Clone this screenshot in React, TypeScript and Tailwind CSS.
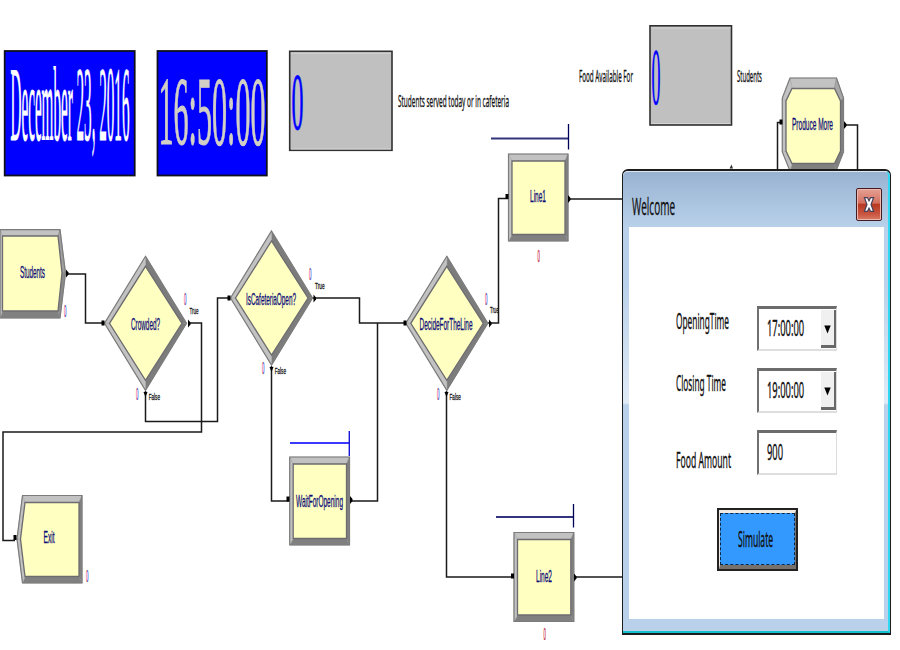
import { useLayoutEffect, useRef, useState } from "react";
import type { ReactNode } from "react";

type Pt = [number, number];

const SERIF = '"Liberation Serif", serif';
const SANS = '"Liberation Sans", sans-serif';
const UI = '"Noto Sans", "Open Sans", sans-serif';

const LIGHT = "#c2c2c2";
const DARK = "#808080";

/** Canvas label squeezed to a fixed width. */
function Label({
  x,
  y,
  w,
  size,
  fill = "#0c0c78",
  font = SANS,
  stroke = 0,
  children,
}: {
  x: number;
  y: number;
  w: number;
  size: number;
  fill?: string;
  font?: string;
  stroke?: number;
  children: string;
}) {
  return (
    <text
      x={x}
      y={y}
      fontSize={size}
      fontFamily={font}
      fill={fill}
      stroke={stroke ? fill : "none"}
      strokeWidth={stroke}
      textLength={w}
      lengthAdjust="spacingAndGlyphs"
    >
      {children}
    </text>
  );
}

/** Bevelled module shape: one shaded face per side around a yellow centre. */
function Bevel({ outer, inner, shades }: { outer: Pt[]; inner: Pt[]; shades: string[] }) {
  return (
    <g strokeLinejoin="miter">
      {outer.map((p, i) => {
        const j = (i + 1) % outer.length;
        return (
          <polygon
            key={i}
            points={[p, outer[j], inner[j], inner[i]].join(" ")}
            fill={shades[i]}
            stroke={shades[i] === LIGHT ? "#a8a8a8" : "#8c8c8c"}
            strokeWidth="0.6"
          />
        );
      })}
      <polygon points={inner.join(" ")} fill="#ffffc2" stroke="#6c6c70" strokeWidth="1.3" />
      <polygon points={outer.join(" ")} fill="none" stroke="#7c7c7c" strokeWidth="1.2" />
    </g>
  );
}

function Box({ x1, y1, x2, y2 }: { x1: number; y1: number; x2: number; y2: number }) {
  return (
    <Bevel
      outer={[[x1, y1], [x2, y1], [x2, y2], [x1, y2]]}
      inner={[[x1 + 3.5, y1 + 7], [x2 - 3, y1 + 7], [x2 - 3, y2 - 6.5], [x1 + 3.5, y2 - 6.5]]}
      shades={[LIGHT, DARK, DARK, LIGHT]}
    />
  );
}

function Diamond({ cx, cy }: { cx: number; cy: number }) {
  return (
    <Bevel
      outer={[[cx, cy - 67], [cx + 41, cy], [cx, cy + 67], [cx - 41, cy]]}
      inner={[[cx, cy - 57], [cx + 36.5, cy], [cx, cy + 57], [cx - 36, cy]]}
      shades={["#7c7c7c", "#7c7c7c", LIGHT, LIGHT]}
    />
  );
}

function Wire({ d }: { d: string }) {
  return <path d={d} fill="none" stroke="#1a1a1a" strokeWidth="1.5" />;
}

const inPorts: Pt[] = [[103, 323], [229, 298], [405, 323], [288, 499], [507, 196.5], [512.5, 576], [15, 537.5], [781, 122]];
const outPorts: Pt[] = [[66, 273.5], [188, 323.5], [313.5, 298.5], [489, 323.5], [568, 199], [574, 577.5], [350, 500], [844, 125]];
const downPorts: Pt[] = [[145.5, 392], [271.5, 367], [446.5, 392]];
const zeros: [number, number, boolean][] = [
  [64, 316.5, false], [184, 304.5, false], [136, 399.5, false], [309, 279.5, false], [262, 374, false],
  [485, 304.5, false], [437, 399.5, false], [537.5, 261.5, true], [543.5, 640, true], [86, 581.5, false],
];

function Model() {
  return (
    <svg className="absolute inset-0" width="900" height="650" viewBox="0 0 900 650">
      <defs>
        <linearGradient id="fringe">
          <stop offset="0.2" stopColor="#f04068" />
          <stop offset="0.8" stopColor="#2038e8" />
        </linearGradient>
      </defs>

      <rect x="4.7" y="51" width="130" height="124.5" fill="#0000ff" stroke="#10101c" strokeWidth="1.8" />
      <Label x={10.5} y={139.5} w={119} size={105} fill="#fff" font={SERIF} stroke={0.9}>December 23, 2016</Label>
      <rect x="157.5" y="51" width="109.3" height="124.5" fill="#0000ff" stroke="#10101c" strokeWidth="1.8" />
      <Label x={158.5} y={144} w={107} size={98} fill="#d2cfc6" font={SERIF} stroke={1.1}>16:50:00</Label>

      <rect x="289.7" y="51.3" width="102.3" height="99" fill="#c0c0c0" stroke="#303030" strokeWidth="1.6" />
      <path d="M291 53.2H391M391 149H291" stroke="#d4d4d4" />
      <Label x={291.5} y={129} w={12} size={80} fill="#0000ff" font={SERIF} stroke={0.8}>0</Label>
      <Label x={398} y={107.3} w={111} size={16.5} fill="#111" font={UI} stroke={0.3}>Students served today or in cafeteria</Label>

      <Label x={579} y={81.5} w={54} size={16} fill="#111" font={UI} stroke={0.3}>Food Available For</Label>
      <rect x="650" y="25.8" width="81.5" height="99.2" fill="#c0c0c0" stroke="#303030" strokeWidth="1.6" />
      <path d="M651 28H730.5M730.5 123.5H651" stroke="#d4d4d4" />
      <Label x={651.5} y={104.3} w={9} size={80} fill="#0000ff" font={SERIF} stroke={0.6}>0</Label>
      <Label x={737} y={81.5} w={25} size={16} fill="#111" font={UI} stroke={0.3}>Students</Label>

      <Wire d="M66 274H85.5V323H104" />
      <Wire d="M188 323H201.5V432H3V540.5H15" />
      <Wire d="M145.5 391V421.5H217.5V298H230" />
      <Wire d="M313 298H359.5V323H406" />
      <Wire d="M271.5 366V501H289" />
      <Wire d="M350 501H377.5V323" />
      <Wire d="M488 323H498.5V198.5H508" />
      <Wire d="M446.5 391V577H513" />
      <Wire d="M569 199H622" />
      <Wire d="M574 577H622" />
      <Wire d="M782 122.5H777.5V170" />
      <Wire d="M844 125H857.5V170" />
      <path d="M729.5 168.5L731.5 164.5L733 168.5Z" fill="#333" />

      <path d="M290 443H349" stroke="#3a3aff" strokeWidth="2" />
      <path d="M349.3 431V456" stroke="#1616d8" strokeWidth="1.4" />
      <path d="M491 138.5H568" stroke="#34347c" strokeWidth="2" />
      <path d="M568.5 124V149.5" stroke="#000058" strokeWidth="1.3" />
      <path d="M496 517H573" stroke="#34347c" strokeWidth="2" />
      <path d="M573.5 504V527.5" stroke="#000058" strokeWidth="1.3" />

      <Bevel
        outer={[[0, 229.7], [60, 229.7], [65.5, 273], [60, 318], [0, 318]]}
        inner={[[2.5, 236], [58, 236], [62, 273], [58, 311], [2.5, 311]]}
        shades={[LIGHT, "#a0a0a0", "#8c8c8c", DARK, LIGHT]}
      />
      <Bevel
        outer={[[22.5, 495.5], [82, 495.5], [82, 583], [22.5, 583], [17, 539]]}
        inner={[[25, 502.5], [79, 502.5], [79, 576.5], [25, 576.5], [20.5, 539]]}
        shades={[LIGHT, DARK, DARK, LIGHT, LIGHT]}
      />
      <Bevel
        outer={[[790, 78], [836.5, 78], [843.5, 98], [843.5, 152], [836, 171], [790, 171], [782.3, 152], [782.3, 98]]}
        inner={[[792, 88.5], [834.5, 88.5], [840.5, 101], [840.5, 151], [834.5, 163.5], [792, 163.5], [786, 151], [786, 101]]}
        shades={[LIGHT, "#a8a8a8", DARK, DARK, DARK, LIGHT, LIGHT, LIGHT]}
      />
      <Box x1={508.5} y1={154} x2={568} y2={241} />
      <Box x1={514} y1={532.5} x2={573.8} y2={621.5} />
      <Box x1={289.7} y1={457} x2={349.5} y2={545} />
      <Diamond cx={145.5} cy={323.3} />
      <Diamond cx={271.5} cy={298} />
      <Diamond cx={446.8} cy={323.3} />

      {inPorts.map(([x, y]) => <rect key={`${x}-${y}`} x={x - 1.5} y={y - 2.5} width="3" height="5" fill="#000" />)}
      {outPorts.map(([x, y]) => <path key={`${x}-${y}`} d={`M${x} ${y - 4}l2.5 3v2l-2.5 3z`} fill="#000" />)}
      {downPorts.map(([x, y]) => <path key={`${x}-${y}`} d={`M${x - 2} ${y}h4l-2 5z`} fill="#000" />)}

      <Label x={20} y={277.5} w={25} size={16} stroke={0.3}>Students</Label>
      <Label x={131} y={330} w={29} size={16} stroke={0.3}>Crowded?</Label>
      <Label x={246} y={305} w={50} size={16} stroke={0.3}>IsCafeteriaOpen?</Label>
      <Label x={419.5} y={330} w={53} size={16} stroke={0.3}>DecideForTheLine</Label>
      <Label x={296} y={507} w={47} size={16} stroke={0.3}>WaitForOpening</Label>
      <Label x={530} y={202} w={16} size={16} stroke={0.3}>Line1</Label>
      <Label x={536} y={582} w={16} size={16} stroke={0.3}>Line2</Label>
      <Label x={43.5} y={543.3} w={11} size={16} stroke={0.3}>Exit</Label>
      <Label x={792} y={130} w={41} size={16} stroke={0.3}>Produce More</Label>

      <Label x={189.5} y={314.3} w={9} size={9.5} fill="#111" stroke={0.3}>True</Label>
      <Label x={315} y={288.8} w={9.5} size={9.5} fill="#111" stroke={0.3}>True</Label>
      <Label x={490} y={313.3} w={8.5} size={9.5} fill="#111" stroke={0.3}>True</Label>
      <Label x={148.7} y={399.5} w={11.3} size={9.5} fill="#111" stroke={0.3}>False</Label>
      <Label x={274.7} y={374.3} w={11.3} size={9.5} fill="#111" stroke={0.3}>False</Label>
      <Label x={449.5} y={399.5} w={11.3} size={9.5} fill="#111" stroke={0.3}>False</Label>

      {zeros.map(([x, y, red]) => (
        <Label key={`${x}-${y}`} x={x} y={y} w={2.4} size={16} fill={red ? "#c01830" : "url(#fringe)"} stroke={0.3}>0</Label>
      ))}
    </svg>
  );
}

/** Dialog text compressed horizontally to the given width. */
function Fit({ w, className, children }: { w: number; className: string; children: ReactNode }) {
  const ref = useRef<HTMLSpanElement>(null);
  const [k, setK] = useState(1);
  useLayoutEffect(() => {
    if (ref.current) setK(w / ref.current.offsetWidth);
  }, [w]);
  return (
    <span className="block shrink-0" style={{ width: w }}>
      <span
        ref={ref}
        className={`inline-block origin-left whitespace-nowrap align-top ${className}`}
        style={{ transform: `scaleX(${k})` }}
      >
        {children}
      </span>
    </span>
  );
}

const uiText = "font-['Noto_Sans','Open_Sans',sans-serif] text-[21px] leading-6 text-[#111] [-webkit-text-stroke:0.35px_#111]";
const field = "flex h-[45px] w-[80px] shrink-0 border-t-[3px] border-r border-b-2 border-l-2 border-t-[#6c6c6c] border-r-[#dcdcdc] border-b-[#dedede] border-l-[#707070] bg-white";

function TimeField({ value }: { value: string }) {
  return (
    <div className={field}>
      <div className="flex-1 pt-[7px] pl-[8px]">
        <Fit w={37} className={uiText}>{value}</Fit>
      </div>
      <div className="mt-px flex h-[38px] w-[14.5px] items-center justify-center border-r-2 border-b-[3px] border-[#686868] bg-[#f0f0f0] pt-[4px]">
        <svg width="7" height="9" viewBox="0 0 7 9"><path d="M0.3 0.5H6.7L3.5 8.5Z" fill="#000" /></svg>
      </div>
    </div>
  );
}

function Row({ label, w, top, children }: { label: string; w: number; top: string; children: ReactNode }) {
  return (
    <div className="flex">
      <div className={`w-[81px] ${top}`}>
        <Fit w={w} className={uiText}>{label}</Fit>
      </div>
      {children}
    </div>
  );
}

function WelcomeDialog() {
  return (
    <div className="absolute top-[169px] left-[622px] flex h-[465.5px] w-[269px] flex-col rounded-t-[6px] border-[1.5px] border-t-2 border-b-2 border-[#1c1c1c] bg-[#b9d1ea]">
      <div className="flex flex-1 flex-col rounded-t-[5px] border-t border-r-2 border-b-2 border-t-[#dce6f0] border-r-[#30d8f0] border-b-[#10c0cc] bg-[linear-gradient(#98b3d2_0px,#b9d1ea_56px,#b9d1ea_110px,#dfeaf6_228px,#dfeaf6_231px,#b9d1ea_233px)]">
        <div className="flex h-[55px] items-start justify-between pl-[9px]">
          <div className="pt-[20px]">
            <Fit w={43} className="font-['Open_Sans',sans-serif] text-[23px] leading-7 text-[#111] [-webkit-text-stroke:0.35px_#111]">Welcome</Fit>
          </div>
          <div className="mt-[16px] mr-[6px] flex h-[33px] w-[26px] items-center justify-center rounded-[2px] border-[1.5px] border-[#431c22] bg-[linear-gradient(#e5a094,#d4705f_45%,#b83a22_50%,#c9543f_80%,#d87d68)] shadow-[inset_0_0_0_1px_#eeb8ae]">
            <svg width="12" height="19" viewBox="0 0 13 20">
              <path d="M1.5 2.5H4.8L6.5 6L8.2 2.5H11.5L8.7 10L11.5 17.5H8.2L6.5 14L4.8 17.5H1.5L4.3 10Z" fill="#fff" stroke="#4a4058" strokeWidth="1.3" />
            </svg>
          </div>
        </div>
        <div className="mr-[4.5px] mb-[12px] ml-[5.5px] flex flex-1 flex-col bg-white pt-[79px] pl-[47px]">
          <div className="flex flex-col gap-[17px]">
            <Row label="OpeningTime" w={53} top="pt-[3px]"><TimeField value="17:00:00" /></Row>
            <Row label="Closing Time" w={50} top="pt-[3px]"><TimeField value="19:00:00" /></Row>
            <Row label="Food Amount" w={55} top="pt-[18px]">
              <div className={field}>
                <div className="pt-[7px] pl-[8px]"><Fit w={16} className={uiText}>900</Fit></div>
              </div>
            </Row>
          </div>
          <button className="mt-[33px] ml-[41px] flex h-[62.5px] w-[81px] border-2 border-[#222] bg-[#3399ff]">
            <span className="flex h-full w-full border-t-[3px] border-r border-b-4 border-l border-t-[#f0ece4] border-r-[#78706a] border-b-[#78706a] border-l-[#f0ece4]">
              <span className="flex h-full w-full items-center justify-center border border-dashed border-[#082848] pr-[3px] pt-px">
                <Fit w={35} className={uiText}>Simulate</Fit>
              </span>
            </span>
          </button>
        </div>
      </div>
    </div>
  );
}

export default function App() {
  return (
    <div className="relative h-[650px] w-[900px] overflow-hidden bg-white">
      <Model />
      <WelcomeDialog />
    </div>
  );
}
